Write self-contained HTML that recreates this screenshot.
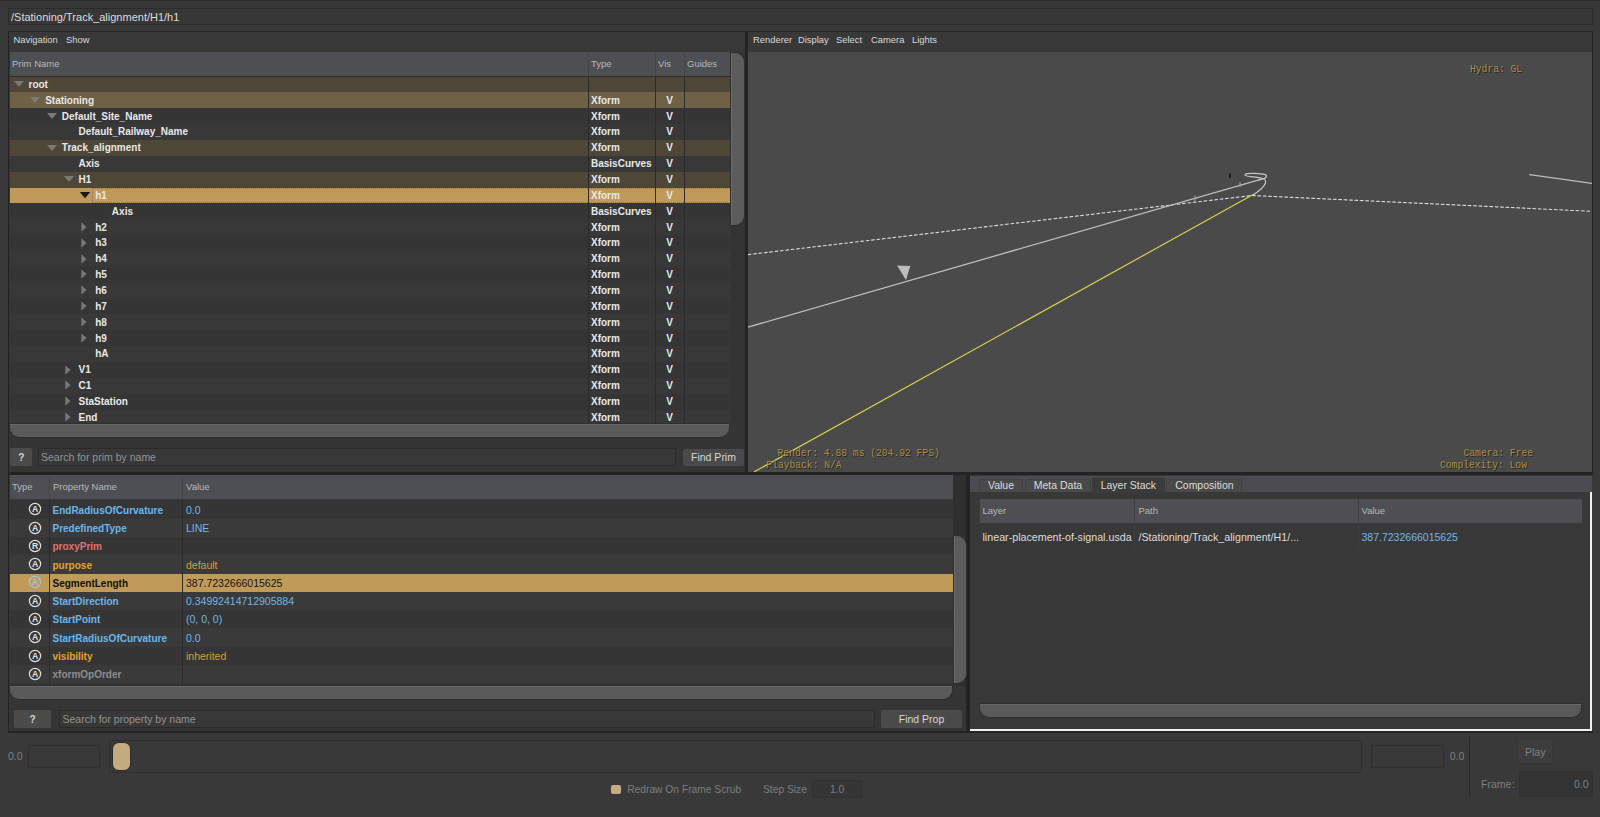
<!DOCTYPE html>
<html><head><meta charset="utf-8"><style>
html,body{margin:0;padding:0;}
body{width:1600px;height:817px;position:relative;overflow:hidden;background:#383838;font-family:"Liberation Sans",sans-serif;}
body div, body svg{position:absolute;}
.t{white-space:nowrap;}
</style></head><body>
<div style="left:0.00px;top:0.00px;width:1600.00px;height:1.00px;background:#2a2a2a;"></div>
<div style="left:8.00px;top:8.00px;width:1585.00px;height:17.00px;background:#373737;border:1px solid #2b2b2b;box-sizing:border-box;"></div>
<div class="t" style="left:11.00px;top:12px;font-size:11px;line-height:11px;color:#dcdcdc;font-weight:normal;font-family:'Liberation Sans',sans-serif;">/Stationing/Track_alignment/H1/h1</div>
<div style="left:8.00px;top:31.00px;width:737.50px;height:441.50px;background:#353535;border:1px solid #232323;box-sizing:border-box;"></div>
<div style="left:9.50px;top:32.00px;width:735.00px;height:19.50px;background:#383838;"></div>
<div class="t" style="left:13.50px;top:35px;font-size:9.4px;line-height:9.4px;color:#d8d8d8;font-weight:normal;font-family:'Liberation Sans',sans-serif;">Navigation</div>
<div class="t" style="left:66.00px;top:35px;font-size:9.4px;line-height:9.4px;color:#d8d8d8;font-weight:normal;font-family:'Liberation Sans',sans-serif;">Show</div>
<div style="left:9.50px;top:51.50px;width:721.00px;height:25.00px;background:#4e4f53;"></div>
<div style="left:588.00px;top:51.50px;width:1.00px;height:24.20px;background:#444549;"></div>
<div style="left:655.10px;top:51.50px;width:1.00px;height:24.20px;background:#444549;"></div>
<div style="left:683.90px;top:51.50px;width:1.00px;height:24.20px;background:#444549;"></div>
<div class="t" style="left:12.00px;top:59px;font-size:9.5px;line-height:9.5px;color:#b8b8b8;font-weight:normal;font-family:'Liberation Sans',sans-serif;">Prim Name</div>
<div class="t" style="left:591.00px;top:59px;font-size:9.5px;line-height:9.5px;color:#b8b8b8;font-weight:normal;font-family:'Liberation Sans',sans-serif;">Type</div>
<div class="t" style="left:658.00px;top:59px;font-size:9.5px;line-height:9.5px;color:#b8b8b8;font-weight:normal;font-family:'Liberation Sans',sans-serif;">Vis</div>
<div class="t" style="left:687.00px;top:59px;font-size:9.5px;line-height:9.5px;color:#b8b8b8;font-weight:normal;font-family:'Liberation Sans',sans-serif;">Guides</div>
<div style="left:9.5px;top:76.5px;width:721px;height:347px;overflow:hidden">
<div style="left:0.00px;top:0.00px;width:721.00px;height:16.06px;background:#4e4637;"></div>
<div style="left:0.00px;top:15.86px;width:721.00px;height:16.06px;background:#6e6146;"></div>
<div style="left:0.00px;top:31.71px;width:721.00px;height:16.06px;background:#353535;"></div>
<div style="left:0.00px;top:47.57px;width:721.00px;height:16.06px;background:#383838;"></div>
<div style="left:0.00px;top:63.43px;width:721.00px;height:16.06px;background:#4e4637;"></div>
<div style="left:0.00px;top:79.28px;width:721.00px;height:16.06px;background:#383838;"></div>
<div style="left:0.00px;top:95.14px;width:721.00px;height:16.06px;background:#4e4637;"></div>
<div style="left:0.00px;top:111.00px;width:721.00px;height:16.06px;background:#c09a58;"></div>
<div style="left:0.00px;top:126.86px;width:721.00px;height:16.06px;background:#353535;"></div>
<div style="left:0.00px;top:142.71px;width:721.00px;height:16.06px;background:#383838;"></div>
<div style="left:0.00px;top:158.57px;width:721.00px;height:16.06px;background:#353535;"></div>
<div style="left:0.00px;top:174.43px;width:721.00px;height:16.06px;background:#383838;"></div>
<div style="left:0.00px;top:190.28px;width:721.00px;height:16.06px;background:#353535;"></div>
<div style="left:0.00px;top:206.14px;width:721.00px;height:16.06px;background:#383838;"></div>
<div style="left:0.00px;top:222.00px;width:721.00px;height:16.06px;background:#353535;"></div>
<div style="left:0.00px;top:237.85px;width:721.00px;height:16.06px;background:#383838;"></div>
<div style="left:0.00px;top:253.71px;width:721.00px;height:16.06px;background:#353535;"></div>
<div style="left:0.00px;top:269.57px;width:721.00px;height:16.06px;background:#383838;"></div>
<div style="left:0.00px;top:285.43px;width:721.00px;height:16.06px;background:#353535;"></div>
<div style="left:0.00px;top:301.28px;width:721.00px;height:16.06px;background:#383838;"></div>
<div style="left:0.00px;top:317.14px;width:721.00px;height:16.06px;background:#353535;"></div>
<div style="left:0.00px;top:333.00px;width:721.00px;height:16.06px;background:#383838;"></div>
</div>
<div class="t" style="left:28.50px;top:80px;font-size:10px;line-height:10px;color:#e8e8e8;font-weight:bold;font-family:'Liberation Sans',sans-serif;">root</div>
<svg style="left:12.50px;top:80.10px" width="12" height="8"><path d="M1 1L11 1L6 7Z" fill="#7d7a72"/></svg>
<div class="t" style="left:45.17px;top:96px;font-size:10px;line-height:10px;color:#e8e8e8;font-weight:bold;font-family:'Liberation Sans',sans-serif;">Stationing</div>
<div class="t" style="left:591.00px;top:96px;font-size:10px;line-height:10px;color:#e8e8e8;font-weight:bold;font-family:'Liberation Sans',sans-serif;">Xform</div>
<div class="t" style="left:669.60px;top:96px;font-size:10px;line-height:10px;color:#e8e8e8;font-weight:bold;font-family:'Liberation Sans',sans-serif;transform:translateX(-50%);">V</div>
<svg style="left:29.17px;top:95.96px" width="12" height="8"><path d="M1 1L11 1L6 7Z" fill="#7d7a72"/></svg>
<div class="t" style="left:61.84px;top:112px;font-size:10px;line-height:10px;color:#e8e8e8;font-weight:bold;font-family:'Liberation Sans',sans-serif;">Default_Site_Name</div>
<div class="t" style="left:591.00px;top:112px;font-size:10px;line-height:10px;color:#e8e8e8;font-weight:bold;font-family:'Liberation Sans',sans-serif;">Xform</div>
<div class="t" style="left:669.60px;top:112px;font-size:10px;line-height:10px;color:#e8e8e8;font-weight:bold;font-family:'Liberation Sans',sans-serif;transform:translateX(-50%);">V</div>
<svg style="left:45.84px;top:111.81px" width="12" height="8"><path d="M1 1L11 1L6 7Z" fill="#7d7a72"/></svg>
<div class="t" style="left:78.51px;top:127px;font-size:10px;line-height:10px;color:#e8e8e8;font-weight:bold;font-family:'Liberation Sans',sans-serif;">Default_Railway_Name</div>
<div class="t" style="left:591.00px;top:127px;font-size:10px;line-height:10px;color:#e8e8e8;font-weight:bold;font-family:'Liberation Sans',sans-serif;">Xform</div>
<div class="t" style="left:669.60px;top:127px;font-size:10px;line-height:10px;color:#e8e8e8;font-weight:bold;font-family:'Liberation Sans',sans-serif;transform:translateX(-50%);">V</div>
<div class="t" style="left:61.84px;top:143px;font-size:10px;line-height:10px;color:#e8e8e8;font-weight:bold;font-family:'Liberation Sans',sans-serif;">Track_alignment</div>
<div class="t" style="left:591.00px;top:143px;font-size:10px;line-height:10px;color:#e8e8e8;font-weight:bold;font-family:'Liberation Sans',sans-serif;">Xform</div>
<div class="t" style="left:669.60px;top:143px;font-size:10px;line-height:10px;color:#e8e8e8;font-weight:bold;font-family:'Liberation Sans',sans-serif;transform:translateX(-50%);">V</div>
<svg style="left:45.84px;top:143.53px" width="12" height="8"><path d="M1 1L11 1L6 7Z" fill="#7d7a72"/></svg>
<div class="t" style="left:78.51px;top:159px;font-size:10px;line-height:10px;color:#e8e8e8;font-weight:bold;font-family:'Liberation Sans',sans-serif;">Axis</div>
<div class="t" style="left:591.00px;top:159px;font-size:10px;line-height:10px;color:#e8e8e8;font-weight:bold;font-family:'Liberation Sans',sans-serif;">BasisCurves</div>
<div class="t" style="left:669.60px;top:159px;font-size:10px;line-height:10px;color:#e8e8e8;font-weight:bold;font-family:'Liberation Sans',sans-serif;transform:translateX(-50%);">V</div>
<div class="t" style="left:78.51px;top:175px;font-size:10px;line-height:10px;color:#e8e8e8;font-weight:bold;font-family:'Liberation Sans',sans-serif;">H1</div>
<div class="t" style="left:591.00px;top:175px;font-size:10px;line-height:10px;color:#e8e8e8;font-weight:bold;font-family:'Liberation Sans',sans-serif;">Xform</div>
<div class="t" style="left:669.60px;top:175px;font-size:10px;line-height:10px;color:#e8e8e8;font-weight:bold;font-family:'Liberation Sans',sans-serif;transform:translateX(-50%);">V</div>
<svg style="left:62.51px;top:175.24px" width="12" height="8"><path d="M1 1L11 1L6 7Z" fill="#7d7a72"/></svg>
<div class="t" style="left:95.18px;top:191px;font-size:10px;line-height:10px;color:#e8e8e8;font-weight:bold;font-family:'Liberation Sans',sans-serif;">h1</div>
<div class="t" style="left:591.00px;top:191px;font-size:10px;line-height:10px;color:#e8e8e8;font-weight:bold;font-family:'Liberation Sans',sans-serif;">Xform</div>
<div class="t" style="left:669.60px;top:191px;font-size:10px;line-height:10px;color:#e8e8e8;font-weight:bold;font-family:'Liberation Sans',sans-serif;transform:translateX(-50%);">V</div>
<svg style="left:79.18px;top:191.10px" width="12" height="8"><path d="M0.8 1L11.2 1L6 7.2Z" fill="#1a1a1a"/></svg>
<div style="left:92.3px;top:187.50px;width:638px;height:15.6px;border:1px dotted #6f6a8a;border-right:none;box-sizing:border-box;opacity:0.8"></div>
<div class="t" style="left:111.85px;top:207px;font-size:10px;line-height:10px;color:#e8e8e8;font-weight:bold;font-family:'Liberation Sans',sans-serif;">Axis</div>
<div class="t" style="left:591.00px;top:207px;font-size:10px;line-height:10px;color:#e8e8e8;font-weight:bold;font-family:'Liberation Sans',sans-serif;">BasisCurves</div>
<div class="t" style="left:669.60px;top:207px;font-size:10px;line-height:10px;color:#e8e8e8;font-weight:bold;font-family:'Liberation Sans',sans-serif;transform:translateX(-50%);">V</div>
<div class="t" style="left:95.18px;top:223px;font-size:10px;line-height:10px;color:#e8e8e8;font-weight:bold;font-family:'Liberation Sans',sans-serif;">h2</div>
<div class="t" style="left:591.00px;top:223px;font-size:10px;line-height:10px;color:#e8e8e8;font-weight:bold;font-family:'Liberation Sans',sans-serif;">Xform</div>
<div class="t" style="left:669.60px;top:223px;font-size:10px;line-height:10px;color:#e8e8e8;font-weight:bold;font-family:'Liberation Sans',sans-serif;transform:translateX(-50%);">V</div>
<svg style="left:81.18px;top:221.81px" width="6" height="10"><path d="M0.3 0.3L5.6 5L0.3 9.7Z" fill="#777777"/></svg>
<div class="t" style="left:95.18px;top:238px;font-size:10px;line-height:10px;color:#e8e8e8;font-weight:bold;font-family:'Liberation Sans',sans-serif;">h3</div>
<div class="t" style="left:591.00px;top:238px;font-size:10px;line-height:10px;color:#e8e8e8;font-weight:bold;font-family:'Liberation Sans',sans-serif;">Xform</div>
<div class="t" style="left:669.60px;top:238px;font-size:10px;line-height:10px;color:#e8e8e8;font-weight:bold;font-family:'Liberation Sans',sans-serif;transform:translateX(-50%);">V</div>
<svg style="left:81.18px;top:237.67px" width="6" height="10"><path d="M0.3 0.3L5.6 5L0.3 9.7Z" fill="#777777"/></svg>
<div class="t" style="left:95.18px;top:254px;font-size:10px;line-height:10px;color:#e8e8e8;font-weight:bold;font-family:'Liberation Sans',sans-serif;">h4</div>
<div class="t" style="left:591.00px;top:254px;font-size:10px;line-height:10px;color:#e8e8e8;font-weight:bold;font-family:'Liberation Sans',sans-serif;">Xform</div>
<div class="t" style="left:669.60px;top:254px;font-size:10px;line-height:10px;color:#e8e8e8;font-weight:bold;font-family:'Liberation Sans',sans-serif;transform:translateX(-50%);">V</div>
<svg style="left:81.18px;top:253.53px" width="6" height="10"><path d="M0.3 0.3L5.6 5L0.3 9.7Z" fill="#777777"/></svg>
<div class="t" style="left:95.18px;top:270px;font-size:10px;line-height:10px;color:#e8e8e8;font-weight:bold;font-family:'Liberation Sans',sans-serif;">h5</div>
<div class="t" style="left:591.00px;top:270px;font-size:10px;line-height:10px;color:#e8e8e8;font-weight:bold;font-family:'Liberation Sans',sans-serif;">Xform</div>
<div class="t" style="left:669.60px;top:270px;font-size:10px;line-height:10px;color:#e8e8e8;font-weight:bold;font-family:'Liberation Sans',sans-serif;transform:translateX(-50%);">V</div>
<svg style="left:81.18px;top:269.38px" width="6" height="10"><path d="M0.3 0.3L5.6 5L0.3 9.7Z" fill="#777777"/></svg>
<div class="t" style="left:95.18px;top:286px;font-size:10px;line-height:10px;color:#e8e8e8;font-weight:bold;font-family:'Liberation Sans',sans-serif;">h6</div>
<div class="t" style="left:591.00px;top:286px;font-size:10px;line-height:10px;color:#e8e8e8;font-weight:bold;font-family:'Liberation Sans',sans-serif;">Xform</div>
<div class="t" style="left:669.60px;top:286px;font-size:10px;line-height:10px;color:#e8e8e8;font-weight:bold;font-family:'Liberation Sans',sans-serif;transform:translateX(-50%);">V</div>
<svg style="left:81.18px;top:285.24px" width="6" height="10"><path d="M0.3 0.3L5.6 5L0.3 9.7Z" fill="#777777"/></svg>
<div class="t" style="left:95.18px;top:302px;font-size:10px;line-height:10px;color:#e8e8e8;font-weight:bold;font-family:'Liberation Sans',sans-serif;">h7</div>
<div class="t" style="left:591.00px;top:302px;font-size:10px;line-height:10px;color:#e8e8e8;font-weight:bold;font-family:'Liberation Sans',sans-serif;">Xform</div>
<div class="t" style="left:669.60px;top:302px;font-size:10px;line-height:10px;color:#e8e8e8;font-weight:bold;font-family:'Liberation Sans',sans-serif;transform:translateX(-50%);">V</div>
<svg style="left:81.18px;top:301.10px" width="6" height="10"><path d="M0.3 0.3L5.6 5L0.3 9.7Z" fill="#777777"/></svg>
<div class="t" style="left:95.18px;top:318px;font-size:10px;line-height:10px;color:#e8e8e8;font-weight:bold;font-family:'Liberation Sans',sans-serif;">h8</div>
<div class="t" style="left:591.00px;top:318px;font-size:10px;line-height:10px;color:#e8e8e8;font-weight:bold;font-family:'Liberation Sans',sans-serif;">Xform</div>
<div class="t" style="left:669.60px;top:318px;font-size:10px;line-height:10px;color:#e8e8e8;font-weight:bold;font-family:'Liberation Sans',sans-serif;transform:translateX(-50%);">V</div>
<svg style="left:81.18px;top:316.96px" width="6" height="10"><path d="M0.3 0.3L5.6 5L0.3 9.7Z" fill="#777777"/></svg>
<div class="t" style="left:95.18px;top:334px;font-size:10px;line-height:10px;color:#e8e8e8;font-weight:bold;font-family:'Liberation Sans',sans-serif;">h9</div>
<div class="t" style="left:591.00px;top:334px;font-size:10px;line-height:10px;color:#e8e8e8;font-weight:bold;font-family:'Liberation Sans',sans-serif;">Xform</div>
<div class="t" style="left:669.60px;top:334px;font-size:10px;line-height:10px;color:#e8e8e8;font-weight:bold;font-family:'Liberation Sans',sans-serif;transform:translateX(-50%);">V</div>
<svg style="left:81.18px;top:332.81px" width="6" height="10"><path d="M0.3 0.3L5.6 5L0.3 9.7Z" fill="#777777"/></svg>
<div class="t" style="left:95.18px;top:349px;font-size:10px;line-height:10px;color:#e8e8e8;font-weight:bold;font-family:'Liberation Sans',sans-serif;">hA</div>
<div class="t" style="left:591.00px;top:349px;font-size:10px;line-height:10px;color:#e8e8e8;font-weight:bold;font-family:'Liberation Sans',sans-serif;">Xform</div>
<div class="t" style="left:669.60px;top:349px;font-size:10px;line-height:10px;color:#e8e8e8;font-weight:bold;font-family:'Liberation Sans',sans-serif;transform:translateX(-50%);">V</div>
<div class="t" style="left:78.51px;top:365px;font-size:10px;line-height:10px;color:#e8e8e8;font-weight:bold;font-family:'Liberation Sans',sans-serif;">V1</div>
<div class="t" style="left:591.00px;top:365px;font-size:10px;line-height:10px;color:#e8e8e8;font-weight:bold;font-family:'Liberation Sans',sans-serif;">Xform</div>
<div class="t" style="left:669.60px;top:365px;font-size:10px;line-height:10px;color:#e8e8e8;font-weight:bold;font-family:'Liberation Sans',sans-serif;transform:translateX(-50%);">V</div>
<svg style="left:64.51px;top:364.53px" width="6" height="10"><path d="M0.3 0.3L5.6 5L0.3 9.7Z" fill="#777777"/></svg>
<div class="t" style="left:78.51px;top:381px;font-size:10px;line-height:10px;color:#e8e8e8;font-weight:bold;font-family:'Liberation Sans',sans-serif;">C1</div>
<div class="t" style="left:591.00px;top:381px;font-size:10px;line-height:10px;color:#e8e8e8;font-weight:bold;font-family:'Liberation Sans',sans-serif;">Xform</div>
<div class="t" style="left:669.60px;top:381px;font-size:10px;line-height:10px;color:#e8e8e8;font-weight:bold;font-family:'Liberation Sans',sans-serif;transform:translateX(-50%);">V</div>
<svg style="left:64.51px;top:380.38px" width="6" height="10"><path d="M0.3 0.3L5.6 5L0.3 9.7Z" fill="#777777"/></svg>
<div class="t" style="left:78.51px;top:397px;font-size:10px;line-height:10px;color:#e8e8e8;font-weight:bold;font-family:'Liberation Sans',sans-serif;">StaStation</div>
<div class="t" style="left:591.00px;top:397px;font-size:10px;line-height:10px;color:#e8e8e8;font-weight:bold;font-family:'Liberation Sans',sans-serif;">Xform</div>
<div class="t" style="left:669.60px;top:397px;font-size:10px;line-height:10px;color:#e8e8e8;font-weight:bold;font-family:'Liberation Sans',sans-serif;transform:translateX(-50%);">V</div>
<svg style="left:64.51px;top:396.24px" width="6" height="10"><path d="M0.3 0.3L5.6 5L0.3 9.7Z" fill="#777777"/></svg>
<div class="t" style="left:78.51px;top:413px;font-size:10px;line-height:10px;color:#e8e8e8;font-weight:bold;font-family:'Liberation Sans',sans-serif;">End</div>
<div class="t" style="left:591.00px;top:413px;font-size:10px;line-height:10px;color:#e8e8e8;font-weight:bold;font-family:'Liberation Sans',sans-serif;">Xform</div>
<div class="t" style="left:669.60px;top:413px;font-size:10px;line-height:10px;color:#e8e8e8;font-weight:bold;font-family:'Liberation Sans',sans-serif;transform:translateX(-50%);">V</div>
<svg style="left:64.51px;top:412.10px" width="6" height="10"><path d="M0.3 0.3L5.6 5L0.3 9.7Z" fill="#777777"/></svg>
<div style="left:9.50px;top:75.70px;width:721.00px;height:1.00px;background:#2d2b27;"></div>
<div style="left:588.00px;top:76.50px;width:1.00px;height:347.20px;background:#2b2b2b;"></div>
<div style="left:655.10px;top:76.50px;width:1.00px;height:347.20px;background:#2b2b2b;"></div>
<div style="left:683.90px;top:76.50px;width:1.00px;height:347.20px;background:#2b2b2b;"></div>
<div style="left:730.50px;top:52.00px;width:14.00px;height:372.00px;background:#333333;"></div>
<div style="left:731px;top:52.5px;width:13px;height:172px;background:#5c5c5c;border-radius:0 9px 9px 0;box-shadow:0 0 0 1px #2f2f2f, inset 1px 0 0 #6c6c6c;"></div>
<div style="left:9.5px;top:424px;width:719px;height:13px;background:#5a5a5a;border-radius:0 0 9px 9px;box-shadow:0 0 0 1px #2f2f2f, inset 0 1px 0 #686868;"></div>
<div style="left:10.4px;top:448.3px;width:22px;height:17.7px;background:#4b4b4b;border-radius:2px;"></div>
<div class="t" style="left:21.40px;top:453px;font-size:10px;line-height:10px;color:#d4d4d4;font-weight:bold;font-family:'Liberation Sans',sans-serif;transform:translateX(-50%);">?</div>
<div style="left:38.00px;top:448.00px;width:638.00px;height:18.00px;background:#383838;border:1px solid #2a2a2a;box-sizing:border-box;"></div>
<div class="t" style="left:41.00px;top:452px;font-size:10.5px;line-height:10.5px;color:#939393;font-weight:normal;font-family:'Liberation Sans',sans-serif;">Search for prim by name</div>
<div style="left:683px;top:448.6px;width:61px;height:17.4px;background:#4a4a4a;border-radius:2px;"></div>
<div class="t" style="left:713.50px;top:452px;font-size:10.5px;line-height:10.5px;color:#d8d8d8;font-weight:normal;font-family:'Liberation Sans',sans-serif;transform:translateX(-50%);">Find Prim</div>
<div style="left:745.50px;top:31.00px;width:2.50px;height:441.50px;background:#232323;"></div>
<div style="left:748.00px;top:31.00px;width:845.00px;height:441.50px;background:#4a4a4a;border:1px solid #232323;border-left:none;box-sizing:border-box;"></div>
<div style="left:748.00px;top:32.00px;width:844.00px;height:19.50px;background:#383838;"></div>
<div class="t" style="left:753.00px;top:35px;font-size:9.4px;line-height:9.4px;color:#d8d8d8;font-weight:normal;font-family:'Liberation Sans',sans-serif;">Renderer</div>
<div class="t" style="left:798.00px;top:35px;font-size:9.4px;line-height:9.4px;color:#d8d8d8;font-weight:normal;font-family:'Liberation Sans',sans-serif;">Display</div>
<div class="t" style="left:836.00px;top:35px;font-size:9.4px;line-height:9.4px;color:#d8d8d8;font-weight:normal;font-family:'Liberation Sans',sans-serif;">Select</div>
<div class="t" style="left:871.00px;top:35px;font-size:9.4px;line-height:9.4px;color:#d8d8d8;font-weight:normal;font-family:'Liberation Sans',sans-serif;">Camera</div>
<div class="t" style="left:912.00px;top:35px;font-size:9.4px;line-height:9.4px;color:#d8d8d8;font-weight:normal;font-family:'Liberation Sans',sans-serif;">Lights</div>
<svg style="left:748px;top:51.5px" width="844" height="420" viewBox="748 51.5 844 420">
<g fill="none" stroke-linecap="round">
<path d="M748.2 254.1 L1252 195 L1590 210.7" stroke="#dcdcdc" stroke-width="1.1" stroke-dasharray="2.8 2.6"/>
<path d="M748.2 326.6 L1260.7 178.8" stroke="#bdbdbd" stroke-width="1.3"/>
<path d="M1252 195 C1262 189 1270 181 1263 178 C1256 175.5 1247 177 1245 174.5 C1244 172 1262 172.5 1266 174.5 C1268 176.5 1264 179 1259 179.5" stroke="#c8c8c8" stroke-width="1.2"/>
<path d="M1529.6 174.1 L1592 182.8" stroke="#bdbdbd" stroke-width="1.3"/>
<path d="M754.7 471.1 L1252.3 194.4" stroke="#d2d24a" stroke-width="1.2"/>
<path d="M1195 195.5 L1195 200" stroke="#aaa" stroke-width="1"/>
<path d="M1240 182 L1240 186" stroke="#aaa" stroke-width="1"/>
</g>
<path d="M897.1 265 L910.3 265.5 L906 279.6 Z" fill="#bdbdbd"/>
<rect x="1229.2" y="173" width="1.6" height="4.3" fill="#111"/>
</svg>
<div class="t" style="left:1470.00px;top:65px;font-size:9.67px;line-height:9.67px;color:#a88e40;font-weight:normal;font-family:'Liberation Mono',monospace;text-shadow:1px 1px 0 #262626;transform:scaleY(1.18);transform-origin:0 85%;">Hydra: GL</div>
<div class="t" style="left:777.50px;top:449px;font-size:9.67px;line-height:9.67px;color:#a88e40;font-weight:normal;font-family:'Liberation Mono',monospace;text-shadow:1px 1px 0 #262626;transform:scaleY(1.18);transform-origin:0 85%;">Render: 4.88 ms (204.92 FPS)</div>
<div class="t" style="left:766.30px;top:461px;font-size:9.67px;line-height:9.67px;color:#a88e40;font-weight:normal;font-family:'Liberation Mono',monospace;text-shadow:1px 1px 0 #262626;transform:scaleY(1.18);transform-origin:0 85%;">Playback: N/A</div>
<div class="t" style="left:1463.50px;top:449px;font-size:9.67px;line-height:9.67px;color:#a88e40;font-weight:normal;font-family:'Liberation Mono',monospace;text-shadow:1px 1px 0 #262626;transform:scaleY(1.18);transform-origin:0 85%;">Camera: Free</div>
<div class="t" style="left:1440.00px;top:461px;font-size:9.67px;line-height:9.67px;color:#a88e40;font-weight:normal;font-family:'Liberation Mono',monospace;text-shadow:1px 1px 0 #262626;transform:scaleY(1.18);transform-origin:0 85%;">Complexity: Low</div>
<div style="left:8.00px;top:472.50px;width:1585.00px;height:2.50px;background:#232323;"></div>
<div style="left:8.00px;top:475.00px;width:959.00px;height:258.00px;background:#353535;border:1px solid #232323;border-top:none;box-sizing:border-box;"></div>
<div style="left:9.50px;top:475.00px;width:943.50px;height:25.30px;background:#4e4f53;"></div>
<div style="left:49.10px;top:475.00px;width:1.00px;height:23.60px;background:#444549;"></div>
<div style="left:181.70px;top:475.00px;width:1.00px;height:23.60px;background:#444549;"></div>
<div style="left:9.50px;top:498.80px;width:943.50px;height:1.55px;background:#393939;"></div>
<div class="t" style="left:12.00px;top:482px;font-size:9.5px;line-height:9.5px;color:#b8b8b8;font-weight:normal;font-family:'Liberation Sans',sans-serif;">Type</div>
<div class="t" style="left:53.00px;top:482px;font-size:9.5px;line-height:9.5px;color:#b8b8b8;font-weight:normal;font-family:'Liberation Sans',sans-serif;">Property Name</div>
<div class="t" style="left:186.00px;top:482px;font-size:9.5px;line-height:9.5px;color:#b8b8b8;font-weight:normal;font-family:'Liberation Sans',sans-serif;">Value</div>
<div style="left:9.50px;top:500.35px;width:943.50px;height:18.29px;background:#353535;"></div>
<div class="t" style="left:52.50px;top:506px;font-size:10px;line-height:10px;color:#6bb6ea;font-weight:bold;font-family:'Liberation Sans',sans-serif;">EndRadiusOfCurvature</div>
<div class="t" style="left:186.00px;top:505px;font-size:10.5px;line-height:10.5px;color:#73b5e6;font-weight:normal;font-family:'Liberation Sans',sans-serif;">0.0</div>
<svg style="left:28.10px;top:502.25px" width="14" height="14"><circle cx="7" cy="7" r="5.6" fill="none" stroke="#e0e0e0" stroke-width="1.2"/><text x="7" y="10.3" text-anchor="middle" font-family="Liberation Sans" font-size="8.6" font-weight="bold" fill="#e0e0e0">A</text></svg>
<div style="left:9.50px;top:518.64px;width:943.50px;height:18.29px;background:#3a3a3a;"></div>
<div class="t" style="left:52.50px;top:524px;font-size:10px;line-height:10px;color:#6bb6ea;font-weight:bold;font-family:'Liberation Sans',sans-serif;">PredefinedType</div>
<div class="t" style="left:186.00px;top:523px;font-size:10.5px;line-height:10.5px;color:#73b5e6;font-weight:normal;font-family:'Liberation Sans',sans-serif;">LINE</div>
<svg style="left:28.10px;top:520.54px" width="14" height="14"><circle cx="7" cy="7" r="5.6" fill="none" stroke="#e0e0e0" stroke-width="1.2"/><text x="7" y="10.3" text-anchor="middle" font-family="Liberation Sans" font-size="8.6" font-weight="bold" fill="#e0e0e0">A</text></svg>
<div style="left:9.50px;top:536.93px;width:943.50px;height:18.29px;background:#353535;"></div>
<div class="t" style="left:52.50px;top:542px;font-size:10px;line-height:10px;color:#e07272;font-weight:bold;font-family:'Liberation Sans',sans-serif;">proxyPrim</div>
<svg style="left:28.10px;top:538.83px" width="14" height="14"><circle cx="7" cy="7" r="5.6" fill="none" stroke="#e0e0e0" stroke-width="1.2"/><text x="7" y="10.3" text-anchor="middle" font-family="Liberation Sans" font-size="8.6" font-weight="bold" fill="#e0e0e0">R</text></svg>
<div style="left:9.50px;top:555.22px;width:943.50px;height:18.29px;background:#3a3a3a;"></div>
<div class="t" style="left:52.50px;top:561px;font-size:10px;line-height:10px;color:#e5a22f;font-weight:bold;font-family:'Liberation Sans',sans-serif;">purpose</div>
<div class="t" style="left:186.00px;top:560px;font-size:10.5px;line-height:10.5px;color:#d99c34;font-weight:normal;font-family:'Liberation Sans',sans-serif;">default</div>
<svg style="left:28.10px;top:557.12px" width="14" height="14"><circle cx="7" cy="7" r="5.6" fill="none" stroke="#e0e0e0" stroke-width="1.2"/><text x="7" y="10.3" text-anchor="middle" font-family="Liberation Sans" font-size="8.6" font-weight="bold" fill="#e0e0e0">A</text></svg>
<div style="left:9.50px;top:573.51px;width:943.50px;height:18.29px;background:#c09a58;"></div>
<div class="t" style="left:52.50px;top:579px;font-size:10px;line-height:10px;color:#111111;font-weight:bold;font-family:'Liberation Sans',sans-serif;">SegmentLength</div>
<div class="t" style="left:186.00px;top:578px;font-size:10.5px;line-height:10.5px;color:#151515;font-weight:normal;font-family:'Liberation Sans',sans-serif;">387.7232666015625</div>
<svg style="left:28.10px;top:575.41px" width="14" height="14"><circle cx="7" cy="7" r="5.6" fill="none" stroke="#9ec3dc" stroke-width="1.2"/><text x="7" y="10.3" text-anchor="middle" font-family="Liberation Sans" font-size="8.6" font-weight="bold" fill="#9ec3dc">A</text></svg>
<div style="left:9.50px;top:591.80px;width:943.50px;height:18.29px;background:#3a3a3a;"></div>
<div class="t" style="left:52.50px;top:597px;font-size:10px;line-height:10px;color:#6bb6ea;font-weight:bold;font-family:'Liberation Sans',sans-serif;">StartDirection</div>
<div class="t" style="left:186.00px;top:596px;font-size:10.5px;line-height:10.5px;color:#73b5e6;font-weight:normal;font-family:'Liberation Sans',sans-serif;">0.34992414712905884</div>
<svg style="left:28.10px;top:593.70px" width="14" height="14"><circle cx="7" cy="7" r="5.6" fill="none" stroke="#e0e0e0" stroke-width="1.2"/><text x="7" y="10.3" text-anchor="middle" font-family="Liberation Sans" font-size="8.6" font-weight="bold" fill="#e0e0e0">A</text></svg>
<div style="left:9.50px;top:610.09px;width:943.50px;height:18.29px;background:#353535;"></div>
<div class="t" style="left:52.50px;top:615px;font-size:10px;line-height:10px;color:#6bb6ea;font-weight:bold;font-family:'Liberation Sans',sans-serif;">StartPoint</div>
<div class="t" style="left:186.00px;top:614px;font-size:10.5px;line-height:10.5px;color:#73b5e6;font-weight:normal;font-family:'Liberation Sans',sans-serif;">(0, 0, 0)</div>
<svg style="left:28.10px;top:611.99px" width="14" height="14"><circle cx="7" cy="7" r="5.6" fill="none" stroke="#e0e0e0" stroke-width="1.2"/><text x="7" y="10.3" text-anchor="middle" font-family="Liberation Sans" font-size="8.6" font-weight="bold" fill="#e0e0e0">A</text></svg>
<div style="left:9.50px;top:628.38px;width:943.50px;height:18.29px;background:#3a3a3a;"></div>
<div class="t" style="left:52.50px;top:634px;font-size:10px;line-height:10px;color:#6bb6ea;font-weight:bold;font-family:'Liberation Sans',sans-serif;">StartRadiusOfCurvature</div>
<div class="t" style="left:186.00px;top:633px;font-size:10.5px;line-height:10.5px;color:#73b5e6;font-weight:normal;font-family:'Liberation Sans',sans-serif;">0.0</div>
<svg style="left:28.10px;top:630.28px" width="14" height="14"><circle cx="7" cy="7" r="5.6" fill="none" stroke="#e0e0e0" stroke-width="1.2"/><text x="7" y="10.3" text-anchor="middle" font-family="Liberation Sans" font-size="8.6" font-weight="bold" fill="#e0e0e0">A</text></svg>
<div style="left:9.50px;top:646.67px;width:943.50px;height:18.29px;background:#353535;"></div>
<div class="t" style="left:52.50px;top:652px;font-size:10px;line-height:10px;color:#e5a22f;font-weight:bold;font-family:'Liberation Sans',sans-serif;">visibility</div>
<div class="t" style="left:186.00px;top:651px;font-size:10.5px;line-height:10.5px;color:#d99c34;font-weight:normal;font-family:'Liberation Sans',sans-serif;">inherited</div>
<svg style="left:28.10px;top:648.57px" width="14" height="14"><circle cx="7" cy="7" r="5.6" fill="none" stroke="#e0e0e0" stroke-width="1.2"/><text x="7" y="10.3" text-anchor="middle" font-family="Liberation Sans" font-size="8.6" font-weight="bold" fill="#e0e0e0">A</text></svg>
<div style="left:9.50px;top:664.96px;width:943.50px;height:18.29px;background:#3a3a3a;"></div>
<div class="t" style="left:52.50px;top:670px;font-size:10px;line-height:10px;color:#8c8c8c;font-weight:bold;font-family:'Liberation Sans',sans-serif;">xformOpOrder</div>
<svg style="left:28.10px;top:666.86px" width="14" height="14"><circle cx="7" cy="7" r="5.6" fill="none" stroke="#e0e0e0" stroke-width="1.2"/><text x="7" y="10.3" text-anchor="middle" font-family="Liberation Sans" font-size="8.6" font-weight="bold" fill="#e0e0e0">A</text></svg>
<div style="left:49.10px;top:500.30px;width:1.00px;height:185.20px;background:#2b2b2b;"></div>
<div style="left:181.70px;top:500.30px;width:1.00px;height:185.20px;background:#2b2b2b;"></div>
<div style="left:953.00px;top:475.00px;width:13.00px;height:210.50px;background:#2f2f2f;"></div>
<div style="left:953.5px;top:536.2px;width:12.5px;height:147.3px;background:#5c5c5c;border-radius:0 9px 9px 0;box-shadow:0 0 0 1px #2f2f2f, inset 1px 0 0 #6c6c6c;"></div>
<div style="left:9.5px;top:685.8px;width:942px;height:12.8px;background:#5a5a5a;border-radius:0 0 9px 9px;box-shadow:0 0 0 1px #2f2f2f, inset 0 1px 0 #686868;"></div>
<div style="left:14px;top:710.2px;width:37px;height:17.8px;background:#4b4b4b;border-radius:2px;"></div>
<div class="t" style="left:32.50px;top:715px;font-size:10px;line-height:10px;color:#d4d4d4;font-weight:bold;font-family:'Liberation Sans',sans-serif;transform:translateX(-50%);">?</div>
<div style="left:59.00px;top:710.00px;width:816.00px;height:18.00px;background:#383838;border:1px solid #2a2a2a;box-sizing:border-box;"></div>
<div class="t" style="left:62.50px;top:714px;font-size:10.5px;line-height:10.5px;color:#939393;font-weight:normal;font-family:'Liberation Sans',sans-serif;">Search for property by name</div>
<div style="left:881px;top:710.2px;width:81px;height:17.8px;background:#4a4a4a;border-radius:2px;"></div>
<div class="t" style="left:921.50px;top:714px;font-size:10.5px;line-height:10.5px;color:#d8d8d8;font-weight:normal;font-family:'Liberation Sans',sans-serif;transform:translateX(-50%);">Find Prop</div>
<div style="left:967.00px;top:475.00px;width:3.00px;height:258.00px;background:#232323;"></div>
<div style="left:970.00px;top:475.00px;width:623.00px;height:258.00px;background:#383838;"></div>
<div style="left:970.00px;top:476.00px;width:622.00px;height:16.00px;background:#4b4c50;"></div>
<div style="left:979.20px;top:479.3px;width:43.60px;height:13.2px;background:#4a4a4a;border:1px solid #3f3f3f;border-bottom:none;box-sizing:border-box;border-radius:2px 2px 0 0"></div>
<div class="t" style="left:1001.00px;top:480px;font-size:10.5px;line-height:10.5px;color:#dcdcdc;font-weight:normal;font-family:'Liberation Sans',sans-serif;transform:translateX(-50%);">Value</div>
<div style="left:1024.80px;top:479.3px;width:66.40px;height:13.2px;background:#4a4a4a;border:1px solid #3f3f3f;border-bottom:none;box-sizing:border-box;border-radius:2px 2px 0 0"></div>
<div class="t" style="left:1058.00px;top:480px;font-size:10.5px;line-height:10.5px;color:#dcdcdc;font-weight:normal;font-family:'Liberation Sans',sans-serif;transform:translateX(-50%);">Meta Data</div>
<div style="left:1092.00px;top:477.3px;width:72.80px;height:15.5px;background:#3b3b3b;border-radius:2px 2px 0 0;box-shadow:inset 0 1px 0 #444;"></div>
<div class="t" style="left:1128.40px;top:480px;font-size:10.5px;line-height:10.5px;color:#dcdcdc;font-weight:normal;font-family:'Liberation Sans',sans-serif;transform:translateX(-50%);">Layer Stack</div>
<div style="left:1166.40px;top:479.3px;width:76.00px;height:13.2px;background:#4a4a4a;border:1px solid #3f3f3f;border-bottom:none;box-sizing:border-box;border-radius:2px 2px 0 0"></div>
<div class="t" style="left:1204.40px;top:480px;font-size:10.5px;line-height:10.5px;color:#dcdcdc;font-weight:normal;font-family:'Liberation Sans',sans-serif;transform:translateX(-50%);">Composition</div>
<div style="left:980.00px;top:499.20px;width:602.40px;height:24.20px;background:#4d4f52;"></div>
<div style="left:1134.30px;top:499.20px;width:1.00px;height:48.80px;background:#3e3f42;"></div>
<div style="left:1357.50px;top:499.20px;width:1.00px;height:48.80px;background:#3e3f42;"></div>
<div class="t" style="left:982.50px;top:506px;font-size:9.5px;line-height:9.5px;color:#b8b8b8;font-weight:normal;font-family:'Liberation Sans',sans-serif;">Layer</div>
<div class="t" style="left:1138.50px;top:506px;font-size:9.5px;line-height:9.5px;color:#b8b8b8;font-weight:normal;font-family:'Liberation Sans',sans-serif;">Path</div>
<div class="t" style="left:1361.50px;top:506px;font-size:9.5px;line-height:9.5px;color:#b8b8b8;font-weight:normal;font-family:'Liberation Sans',sans-serif;">Value</div>
<div class="t" style="left:982.50px;top:532px;font-size:10.7px;line-height:10.7px;color:#dcdcdc;font-weight:normal;font-family:'Liberation Sans',sans-serif;">linear-placement-of-signal.usda</div>
<div class="t" style="left:1138.50px;top:532px;font-size:10.7px;line-height:10.7px;color:#dcdcdc;font-weight:normal;font-family:'Liberation Sans',sans-serif;">/Stationing/Track_alignment/H1/...</div>
<div class="t" style="left:1361.50px;top:532px;font-size:10.5px;line-height:10.5px;color:#73b5e6;font-weight:normal;font-family:'Liberation Sans',sans-serif;">387.7232666015625</div>
<div style="left:980.4px;top:704px;width:601px;height:13px;background:#5a5a5a;border-radius:0 0 9px 9px;box-shadow:0 0 0 1px #2f2f2f, inset 0 1px 0 #686868;"></div>
<div style="left:1590.00px;top:492.00px;width:2.20px;height:239.00px;background:#f0f0f0;"></div>
<div style="left:970.00px;top:729.10px;width:622.20px;height:2.00px;background:#f0f0f0;"></div>
<div style="left:0.00px;top:733.00px;width:1600.00px;height:84.00px;background:#393939;"></div>
<div style="left:8.00px;top:731.10px;width:1585.00px;height:1.90px;background:#232323;"></div>
<div class="t" style="left:8.00px;top:751px;font-size:10.5px;line-height:10.5px;color:#808080;font-weight:normal;font-family:'Liberation Sans',sans-serif;">0.0</div>
<div style="left:28.20px;top:744.70px;width:72.00px;height:23.70px;background:#393939;border:1px solid #2f2f2f;box-sizing:border-box;"></div>
<div style="left:108.70px;top:740.20px;width:1253.70px;height:32.60px;background:#393939;border:1px solid #2f2f2f;box-sizing:border-box;"></div>
<div style="left:111.5px;top:742.2px;width:19px;height:28.6px;background:#c4ab80;border:1px solid #2a2a2a;box-sizing:border-box;border-radius:7px;"></div>
<div style="left:1370.90px;top:744.60px;width:73.10px;height:23.60px;background:#393939;border:1px solid #2f2f2f;box-sizing:border-box;"></div>
<div class="t" style="left:1449.80px;top:751px;font-size:10.5px;line-height:10.5px;color:#808080;font-weight:normal;font-family:'Liberation Sans',sans-serif;">0.0</div>
<div style="left:1469.10px;top:737.30px;width:1.00px;height:60.20px;background:#262626;"></div>
<div style="left:1517.2px;top:739px;width:36px;height:25px;background:#3d3d3d;border:1px solid #363636;box-sizing:border-box;border-radius:2px;"></div>
<div class="t" style="left:1535.20px;top:747px;font-size:10.5px;line-height:10.5px;color:#808080;font-weight:normal;font-family:'Liberation Sans',sans-serif;transform:translateX(-50%);">Play</div>
<div class="t" style="left:1481.10px;top:779px;font-size:10.5px;line-height:10.5px;color:#7e7e7e;font-weight:normal;font-family:'Liberation Sans',sans-serif;">Frame:</div>
<div style="left:1518.90px;top:770.60px;width:73.90px;height:26.40px;background:#333333;border:1px solid #303030;box-sizing:border-box;"></div>
<div class="t" style="left:1588.50px;top:779px;font-size:10.5px;line-height:10.5px;color:#7e7e7e;font-weight:normal;font-family:'Liberation Sans',sans-serif;transform:translateX(-100%);">0.0</div>
<div style="left:610.7px;top:784.5px;width:10.5px;height:9.7px;background:#c4ab80;border-radius:2px;"></div>
<div class="t" style="left:627.20px;top:785px;font-size:10.25px;line-height:10.25px;color:#7d7d7d;font-weight:normal;font-family:'Liberation Sans',sans-serif;">Redraw On Frame Scrub</div>
<div class="t" style="left:763.00px;top:785px;font-size:10.25px;line-height:10.25px;color:#7d7d7d;font-weight:normal;font-family:'Liberation Sans',sans-serif;">Step Size</div>
<div style="left:812.40px;top:780.00px;width:49.60px;height:18.00px;background:#353535;border:1px solid #313131;box-sizing:border-box;"></div>
<div class="t" style="left:837.00px;top:785px;font-size:10.25px;line-height:10.25px;color:#7d7d7d;font-weight:normal;font-family:'Liberation Sans',sans-serif;transform:translateX(-50%);">1.0</div>
</body></html>
